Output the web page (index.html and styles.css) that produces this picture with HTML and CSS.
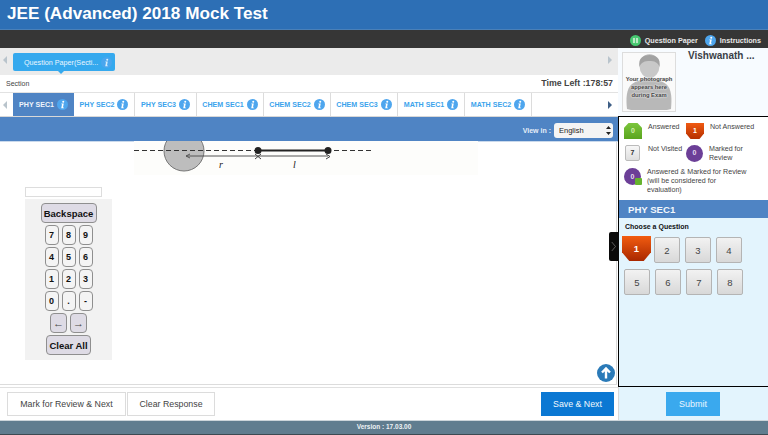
FILE: index.html
```html
<!DOCTYPE html>
<html lang="en">
<head>
<meta charset="utf-8">
<title>JEE (Advanced) 2018 Mock Test</title>
<link rel="stylesheet" href="styles.css">
</head>
<body>
<svg class="defs" width="0" height="0" aria-hidden="true">
  <symbol id="info" viewBox="0 0 12 12">
    <circle cx="6" cy="6" r="6" fill="#4ea6ee"/>
    <circle cx="6.8" cy="2.9" r="1.1" fill="#fff"/>
    <path d="M4.8 5h2.6L6.500 9.200h1v.8H4.600l.9-4.200h-.9z" fill="#fff"/>
  </symbol>
</svg>
<header class="title-bar">JEE (Advanced) 2018 Mock Test</header>
<div class="tool-bar">
  <span class="tool-link">
    <svg class="tool-icon" viewBox="0 0 12 12"><circle cx="6" cy="6" r="6" fill="#45c76f"/><rect x="3.200" y="3.200" width="5.600" height="5.600" fill="#b8e8c4"/><path d="M6 3v6" stroke="#45c76f"/></svg>
    Question Paper
  </span>
  <span class="tool-link">
    <svg class="tool-icon"><use href="#info"/></svg>
    Instructions
  </span>
</div>
<div class="main">
  <section class="left">
    <div class="paper-strip">
      <span class="arrow-left pale"></span>
      <div class="paper-tab">Question Paper(Secti... <svg class="info light"><use href="#info"/></svg></div>
      <span class="arrow-right pale push"></span>
    </div>
    <div class="section-row">
      <span>Section</span>
      <strong>Time Left :178:57</strong>
    </div>
    <nav class="tabs">
      <span class="tab-arrow"><span class="arrow-left pale"></span></span>
      <span class="tab active w1">PHY SEC1 <svg class="info"><use href="#info"/></svg></span>
      <span class="tab w2">PHY SEC2 <svg class="info"><use href="#info"/></svg></span>
      <span class="tab w3">PHY SEC3 <svg class="info"><use href="#info"/></svg></span>
      <span class="tab w4">CHEM SEC1 <svg class="info"><use href="#info"/></svg></span>
      <span class="tab w4">CHEM SEC2 <svg class="info"><use href="#info"/></svg></span>
      <span class="tab w4">CHEM SEC3 <svg class="info"><use href="#info"/></svg></span>
      <span class="tab w4">MATH SEC1 <svg class="info"><use href="#info"/></svg></span>
      <span class="tab w4">MATH SEC2 <svg class="info"><use href="#info"/></svg></span>
      <span class="arrow-right dark push"></span>
    </nav>
    <div class="view-bar">
      <label class="view-label" for="lang">View in :</label>
      <span class="lang-wrap">
        <select id="lang" class="lang"><option>English</option></select>
        <svg class="lang-arrows" viewBox="0 0 5 9" width="5" height="9"><path d="M2.500 0L5 3H0zM2.500 9L0 6h5z" fill="#222"/></svg>
      </span>
    </div>
    <div class="question">
      <svg class="figure" viewBox="0 0 344 34" width="344" height="34">
        <rect width="344" height="34" fill="#fdfdfb"/>
        <circle cx="50" cy="10" r="20" fill="#bdbdbd" stroke="#777"/>
        <path d="M0 9.500H238" stroke="#333" stroke-dasharray="5 3" fill="none"/>
        <path d="M124 9.500H194" stroke="#222" stroke-width="2" fill="none"/>
        <path d="M52 15H194M52 15l4-2M52 15l4 2" stroke="#555" fill="none"/>
        <circle cx="124" cy="9.500" r="3.500" fill="#222"/>
        <circle cx="194" cy="9.500" r="3.500" fill="#222"/>
        <path d="M121 13l6 5M127 13l-6 5M192 13l4 2.500-4 2.500" stroke="#444" fill="none"/>
        <text x="85" y="27" class="fig-label">r</text>
        <text x="159" y="27" class="fig-label">l</text>
      </svg>
      <div class="answer-box"></div>
      <div class="keypad">
        <button class="key wide">Backspace</button>
        <div class="key-row"><button class="key">7</button><button class="key">8</button><button class="key">9</button></div>
        <div class="key-row"><button class="key">4</button><button class="key">5</button><button class="key">6</button></div>
        <div class="key-row"><button class="key">1</button><button class="key">2</button><button class="key">3</button></div>
        <div class="key-row"><button class="key">0</button><button class="key">.</button><button class="key">-</button></div>
        <div class="key-row"><button class="key shaded">←</button><button class="key shaded">→</button></div>
        <button class="key clear">Clear All</button>
      </div>
      <span class="to-top">
        <svg viewBox="0 0 18 18" width="18" height="18"><circle cx="9" cy="9" r="9" fill="#2a7ab8"/><path d="M9 14.500V5M5 8.500L9 4.500l4 4" stroke="#fff" stroke-width="2.400" fill="none"/></svg>
      </span>
    </div>
    <div class="actions">
      <button class="btn">Mark for Review &amp; Next</button>
      <button class="btn">Clear Response</button>
      <button class="btn primary">Save &amp; Next</button>
    </div>
  </section>
  <aside class="right">
    <div class="collapse"><svg viewBox="0 0 8 14" width="6" height="11"><path d="M1 1l5 6-5 6" stroke="#777" fill="none"/></svg></div>
    <div class="profile">
      <div class="photo">
        <svg class="silhouette" viewBox="0 0 52 58" width="52" height="58">
          <path d="M4 56c-1-10-1-20 5-25 4-3 9-4 12-6h10c3 2 8 3 12 6 6 5 6 15 5 25l-4 1H8z" fill="#b8b8b8"/>
          <ellipse cx="26.500" cy="13" rx="10" ry="12" fill="#c8c8c8"/>
          <path d="M16.500 14C15 5 20 2 26.500 2S38 5 36.500 14C35 9 31 8 26.500 8s-8.500 1-10 6z" fill="#a2a2a2"/>
        </svg>
        <span class="photo-text">Your photograph appears here during Exam</span>
      </div>
      <strong class="candidate">Vishwanath ...</strong>
    </div>
    <div class="panel">
      <div class="legend">
        <div class="legend-row">
          <span class="legend-item i1"><span class="badge answered">0</span><span>Answered</span></span>
          <span class="legend-item"><span class="badge not-answered">1</span><span>Not Answered</span></span>
        </div>
        <div class="legend-row">
          <span class="legend-item i1"><span class="badge not-visited">7</span><span>Not Visited</span></span>
          <span class="legend-item"><span class="badge marked">0</span><span class="two-line">Marked for Review</span></span>
        </div>
        <div class="legend-row">
          <span class="legend-item"><span class="badge marked">0<i class="tick"></i></span><span class="long">Answered &amp; Marked for Review (will be considered for evaluation)</span></span>
        </div>
      </div>
      <div class="sec-head">PHY SEC1</div>
      <div class="palette">
        <div class="choose">Choose a Question</div>
        <div class="q-grid">
          <span class="q current">1</span><span class="q">2</span><span class="q">3</span><span class="q">4</span>
          <span class="q">5</span><span class="q">6</span><span class="q">7</span><span class="q">8</span>
        </div>
      </div>
    </div>
    <div class="submit-wrap"><button class="submit">Submit</button></div>
  </aside>
</div>
<footer class="version">Version : 17.03.00</footer>
</body>
</html>
```
FILE: styles.css
```css
* { box-sizing: border-box; }
html, body { margin: 0; height: 100%; }
body {
  width: 768px; height: 435px; overflow: hidden; background: #fff;
  font-family: "Liberation Sans", Arial, sans-serif; color: #333;
  display: flex; flex-direction: column;
}
.defs { position: absolute; }
button { font-family: inherit; cursor: pointer; }

.title-bar {
  height: 30px; flex: none; background: #2d6fb5; border-bottom: 1px solid #4a80b8;
  color: #fff; font-size: 17.150px; font-weight: 700; padding: 1px 0 0 7px; line-height: 24px;
}
.tool-bar {
  height: 18px; flex: none; background: #363636; color: #e8e8e8;
  font-size: 7.200px; font-weight: 700; display: flex; justify-content: flex-end;
  align-items: center; padding: 2px 7px 0 0; gap: 7px;
}
.tool-link { display: flex; align-items: center; gap: 4px; }
.tool-icon { width: 11px; height: 11px; }

.main { flex: 1; display: flex; min-height: 0; }
.left { width: 618px; flex: none; display: flex; flex-direction: column; }

.paper-strip {
  height: 27px; flex: none; background: #ebebeb; display: flex; align-items: flex-start;
  padding: 5px 6px 0 3px;
}
.arrow-left, .arrow-right { width: 0; height: 0; border-style: solid; flex: none; }
.arrow-left { border-width: 4px 4px 4px 0; border-color: transparent #b9c4cc transparent transparent; }
.arrow-right { border-width: 4px 0 4px 4px; border-color: transparent transparent transparent #b9c4cc; }
.arrow-right.dark { border-left-color: #3e5f86; }
.paper-strip .arrow-left, .paper-strip .arrow-right { margin-top: 3px; }
.push { margin-left: auto; }
.paper-tab {
  position: relative; margin-left: 6px; width: 102px; height: 18px; background: #35a9ee; border-radius: 2px;
  color: #eaf6fe; font-size: 7.200px; display: flex; align-items: center; gap: 1px; padding-left: 11px; white-space: pre;
}
.paper-tab::after {
  content: ""; position: absolute; left: 45px; bottom: -3px;
  border-style: solid; border-width: 3px 3px 0; border-color: #35a9ee transparent transparent;
}
.info { width: 11px; height: 11px; flex: none; }
.info.light { opacity: .8; }

.section-row {
  height: 18px; flex: none; display: flex; justify-content: space-between; align-items: center;
  padding: 0 5px 1px 6px; font-size: 7px; color: #444; border-bottom: 1px solid #e2e2e2;
}
.section-row strong { font-size: 8.800px; color: #444; }

.tabs {
  height: 24px; flex: none; display: flex; align-items: stretch; border-bottom: 1px solid #d8d8d8;
  padding-right: 6px; font-size: 7.100px; font-weight: 700; color: #3ba3ec;
}
.tabs > .arrow-right { align-self: center; }
.tab-arrow { width: 13px; display: flex; align-items: center; padding-left: 3px; flex: none; }
.tab {
  display: flex; align-items: center; justify-content: center; gap: 1px; border-right: 1px solid #dcdcdc;
  white-space: pre;
}
.w1 { width: 61px; border-right: 0; }
.w2 { width: 61px; }
.w3 { width: 62px; }
.w4 { width: 67px; }
.tab.active { background: #4f84c4; color: #eef4fb; }

.view-bar {
  height: 25px; flex: none; background: #4f84c4; display: flex; justify-content: flex-end;
  align-items: center; padding: 2px 5px 0 0; gap: 3px;
  border-bottom: 1px solid #c9d9ec;
}
.view-label { color: #e6eef8; font-size: 7px; font-weight: 700; }
.lang-wrap { position: relative; display: block; width: 59px; height: 15px; }
.lang {
  appearance: none; -webkit-appearance: none; display: block;
  width: 59px; height: 15px; border: 0; border-radius: 3px; background: #f4f4f4; font: 7.500px "Liberation Sans", sans-serif;
  color: #222; padding: 0 0 0 5px;
}
.lang-arrows { position: absolute; right: 2px; top: 3px; pointer-events: none; }

.question {
  position: relative; flex: 1; min-height: 0; margin-right: 1px; border-right: 1px solid #d8d8d8;
  border-bottom: 1px solid #dcdcdc; display: flex; flex-direction: column;
}
.figure { display: block; margin: -1px 0 0 134px; flex: none; }
.fig-label { font: italic 10px "Liberation Serif", serif; fill: #222; }
.answer-box { width: 77px; height: 10px; margin: 12px 0 0 25px; border: 1px solid #ddd; background: #fff; flex: none; }
.keypad {
  width: 87px; height: 161px; margin: 2px 0 0 25px; background: #f2f2f2; flex: none;
  display: flex; flex-direction: column; align-items: center; padding-top: 4px; gap: 2px;
}
.key-row { display: flex; gap: 3px; }
.key {
  width: 14px; height: 20px; padding: 0; background: #f4f4f4; border: 1px solid #8f8f8f; border-radius: 4px;
  color: #111; font-size: 9px; font-weight: 700;
}
.key.wide { width: 56px; height: 20px; background: #dedbe5; font-size: 9.500px; }
.key.shaded { width: 17px; background: #dedbe5; color: #444; font-size: 11px; font-weight: 400; }
.key.clear { width: 45px; height: 20px; background: #dedbe5; font-size: 9.500px; }
.to-top { position: absolute; right: 1px; bottom: 2px; line-height: 0; }

.actions {
  height: 33px; flex: none; margin-top: 2px; border-top: 1px solid #e0e0e0;
  display: flex; align-items: center; padding: 0 4px 0 7px; gap: 1px;
}
.btn {
  height: 24px; border: 1px solid #dcdcdc; background: #fff; color: #444; font-size: 8.800px; width: 119px; padding: 0;
}
.btn:nth-child(2) { width: 88px; }
.btn.primary { width: 73px; margin-left: auto; background: #0b78d3; border-color: #0b78d3; color: #f2f8fd; }

.right { position: relative; flex: 1; display: flex; flex-direction: column; background: #e3f4fd; }
.collapse {
  position: absolute; left: -9px; top: 184px; width: 10px; height: 29px; background: #0a0a0a;
  border-radius: 2px 0 0 2px; display: flex; align-items: center; justify-content: center; z-index: 2;
}
.profile {
  height: 68px; flex: none; background: #f7fbff; display: flex; padding: 4px 0 0 4px; gap: 12px;
}
.photo {
  position: relative; width: 54px; height: 60px; border: 1px solid #ddd; background: #fafafa; overflow: hidden;
  display: flex; align-items: center; justify-content: center; flex: none;
}
.silhouette { position: absolute; left: 0; top: 0; }
.photo-text {
  position: relative; font-size: 5.800px; font-weight: 700; color: #444; text-align: center; line-height: 8.300px;
  width: 50px; margin-top: 10px; text-shadow: 0 0 2px #f4f4f4, 0 0 2px #f4f4f4;
}
.candidate { font-size: 10px; line-height: 10px; margin-top: -1px; color: #3a3f47; }

.panel {
  flex: 1; min-height: 0; display: flex; flex-direction: column;
  border: 1px solid #000; border-right: 0;
}
.legend {
  height: 83px; flex: none; background: #fff; padding: 6px 0 0 5px; font-size: 7.100px; color: #444; line-height: 8.700px;
  display: flex; flex-direction: column; gap: 6px;
}
.legend-row { display: flex; }
.legend-item { display: flex; gap: 6px; }
.i1 { width: 62px; }
.badge {
  position: relative; flex: none; width: 18px; height: 16px; display: flex; align-items: center; justify-content: center;
  font-size: 7px; font-weight: 700; color: #fff;
}
.answered { background: linear-gradient(#7bc53c, #5aa51e); clip-path: polygon(25% 0, 75% 0, 100% 30%, 100% 100%, 0 100%, 0 30%); color: #d4f0b0; }
.not-answered { background: linear-gradient(#f05a12, #b52f00); clip-path: polygon(0 0, 100% 0, 100% 65%, 75% 100%, 25% 100%, 0 65%); }
.not-visited {
  width: 15px; margin-left: 1px; margin-right: 2px; background: linear-gradient(#f7f7f7, #dedede); border: 1px solid #bbb; border-radius: 2px; color: #333;
}
.marked { width: 17px; height: 17px; border-radius: 50%; background: #6c3f97; color: #e6dcf0; }
.two-line { width: 48px; }
.long { width: 104px; }
.tick { position: absolute; right: -1px; bottom: 0; width: 7px; height: 7px; background: #66b32e; border-radius: 1px; }
.sec-head {
  height: 18px; flex: none; background: #4f84c4; color: #f2f7fc; font-size: 9.600px; font-weight: 700;
  padding-left: 9px; line-height: 19px;
}
.palette { flex: 1; padding: 4px 0 0 5px; background: #e3f4fd; }
.choose { font-size: 7px; font-weight: 700; color: #111; line-height: 9px; margin-left: 1px; }
.q-grid { display: grid; grid-template-columns: repeat(4, 26px); gap: 6px 5px; margin: 6px 0 0 0; }
.q {
  width: 26px; height: 26px; background: linear-gradient(#f2f2f2, #d8d8d8); border: 1px solid #b4b4b4; border-radius: 2px;
  display: flex; align-items: center; justify-content: center; font-size: 9.500px; color: #444;
}
.q:nth-child(-n+4) { margin-left: -1px; }
.q.current {
  width: 29px; margin: -1px 0 0 -2px; height: 25px; border: 0; border-radius: 0; color: #fff; font-weight: 700;
  background: linear-gradient(#f25c10, #a92800);
  clip-path: polygon(0 0, 100% 0, 100% 65%, 75% 100%, 25% 100%, 0 65%);
}
.submit-wrap {
  height: 33px; flex: none; background: #e3f4fd; border-left: 1px solid #d8d8d8; display: flex; align-items: center; justify-content: center;
  padding-right: 1px;
}
.submit { width: 54px; height: 24px; border: 0; background: #3aa9ee; color: #eaf6fe; font-size: 9px; }

.version {
  height: 15px; flex: none; background: #607d8f; color: #eef2f5; font-size: 6.500px; font-weight: 700; text-align: center; line-height: 12px;
  border-top: 1px solid #ccd5da; border-bottom: 1px solid #3d4a52;
}
```
